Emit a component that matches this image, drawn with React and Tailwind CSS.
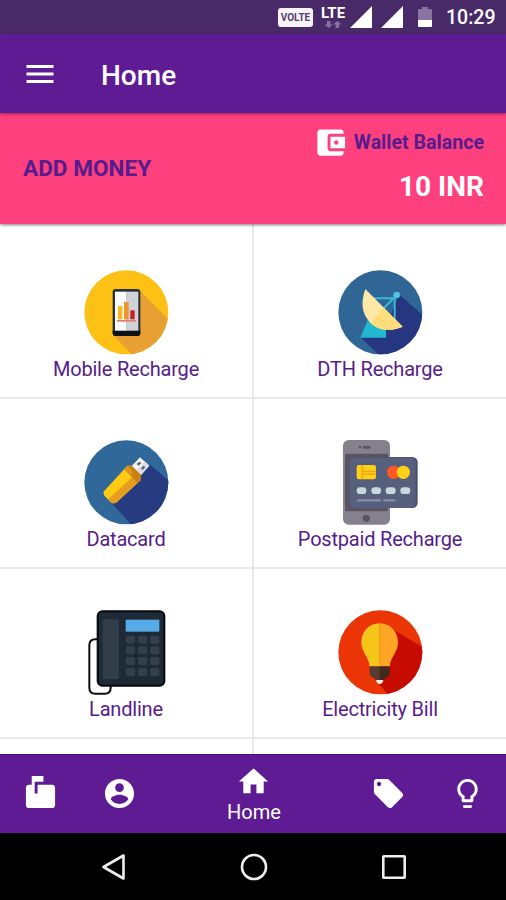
import React from "react";

function MaterialIcon({ d, className = "" }) {
  return (
    <svg viewBox="0 0 24 24" className={`block shrink-0 fill-current ${className}`}>
      <path d={d} />
    </svg>
  );
}

const icons = {
  menu: "M3 18h18v-2H3v2zm0-5h18v-2H3v2zm0-7v2h18V6H3z",
  wallet:
    "M21 18v1c0 1.1-.9 2-2 2H5c-1.11 0-2-.9-2-2V5c0-1.1.89-2 2-2h14c1.1 0 2 .9 2 2v1h-9c-1.11 0-2 .9-2 2v8c0 1.1.89 2 2 2h9zm-9-2h10V8H12v8zm4-2.5c-.83 0-1.5-.67-1.5-1.5s.67-1.5 1.5-1.5 1.5.67 1.5 1.5-.67 1.5-1.5 1.5z",
  mailbox:
    "M20 6H10v6H8V4h6V0H6v6H4c-1.1 0-2 .9-2 2v12c0 1.1.9 2 2 2h16c1.1 0 2-.9 2-2V8c0-1.1-.9-2-2-2z",
  account:
    "M12 2C6.48 2 2 6.48 2 12s4.48 10 10 10 10-4.48 10-10S17.52 2 12 2zm0 3c1.66 0 3 1.34 3 3s-1.34 3-3 3-3-1.34-3-3 1.34-3 3-3zm0 14.2c-2.5 0-4.71-1.28-6-3.22.03-1.99 4-3.08 6-3.08 1.99 0 5.97 1.09 6 3.08-1.29 1.94-3.5 3.22-6 3.22z",
  home: "M10 20v-6h4v6h5v-8h3L12 3 2 12h3v8z",
  tag: "M21.41 11.58l-9-9C12.05 2.22 11.55 2 11 2H4c-1.1 0-2 .9-2 2v7c0 .55.22 1.05.59 1.42l9 9c.36.36.86.58 1.41.58.55 0 1.05-.22 1.41-.59l7-7c.37-.36.59-.86.59-1.41 0-.55-.23-1.06-.59-1.42zM5.5 7C4.67 7 4 6.33 4 5.5S4.67 4 5.5 4 7 4.67 7 5.5 6.33 7 5.5 7z",
  bulb: "M9 21c0 .55.45 1 1 1h4c.55 0 1-.45 1-1v-1H9v1zm3-19C8.14 2 5 5.14 5 9c0 2.38 1.19 4.47 3 5.74V17c0 .55.45 1 1 1h6c.55 0 1-.45 1-1v-2.26c1.81-1.27 3-3.36 3-5.74 0-3.86-3.14-7-7-7zm2.85 11.1l-.85.6V16h-4v-2.3l-.85-.6C7.8 12.16 7 10.63 7 9c0-2.76 2.24-5 5-5s5 2.24 5 5c0 1.63-.8 3.16-2.15 4.1z",
};

function MobileArt() {
  return (
    <svg viewBox="102 30 252 252" className="block size-[84px] overflow-visible">
      <clipPath id="mobile-disc"><circle cx="229" cy="157" r="126" /></clipPath>
      <g clipPath="url(#mobile-disc)">
        <rect x="100" y="28" width="260" height="260" fill="#fdc015" />
        <path d="M270 92L366 188V300H262L190 226Z" fill="#e8a033" />
      </g>
      <rect x="188" y="87" width="83" height="141" rx="9" fill="#263238" />
      <path d="M188 212h83v7a9 9 0 0 1-9 9h-65a9 9 0 0 1-9-9z" fill="#0e1318" />
      <rect x="195" y="95" width="35" height="117" fill="#fafcfd" />
      <rect x="229" y="95" width="36" height="117" fill="#cfd3d9" />
      <rect x="204" y="138" width="13" height="40" fill="#fbb71a" />
      <rect x="222" y="126" width="14" height="52" fill="#f0932b" />
      <rect x="241" y="151" width="13" height="27" fill="#c62020" />
      <rect x="201" y="180" width="56" height="5" fill="#dd8070" />
    </svg>
  );
}

function DishArt() {
  return (
    <svg viewBox="114 30 252 252" className="block size-[84px] overflow-visible">
      <clipPath id="dish-disc"><circle cx="241" cy="157" r="126" /></clipPath>
      <g clipPath="url(#dish-disc)">
        <rect x="112" y="28" width="260" height="260" fill="#2f6696" />
        <path d="M297 103L375 172V300H252L182 232L258 200Z" fill="#263680" />
      </g>
      <path d="M205 176L181 233H258V200Z" fill="#22b8d0" />
      <path d="M218 115H287M284 112V190M289 106L243 153" fill="none" stroke="#37bad4" strokeWidth="6" />
      <circle cx="290" cy="105" r="10" fill="#4cc3e3" />
      <path d="M196 87L308 200C278 213 239 216 211 188C181 158 184 121 196 87Z" fill="#ffe8a6" />
      <path d="M251 143L308 200C278 213 239 216 211 188Z" fill="#ffdc7c" />
    </svg>
  );
}

function UsbArt() {
  return (
    <svg viewBox="102 30 252 252" className="block size-[84px] overflow-visible">
      <clipPath id="usb-disc"><circle cx="229" cy="157" r="126" /></clipPath>
      <g clipPath="url(#usb-disc)">
        <rect x="100" y="28" width="260" height="260" fill="#31689a" />
        <path d="M298 103L366 160V300H258L185 219Z" fill="#263b80" />
      </g>
      <path d="M270 82L298 107L273 135L245 108Z" fill="#f2f4f7" />
      <path d="M284 94L298 107L273 135L260 121Z" fill="#d9dee5" />
      <path d="M260 101L269 95L274 100L265 107ZM273 115L281 107L286 112L277 120Z" fill="#56616e" />
      <path d="M232 107H245L273 135V149L200 217Q193 222 184 218L165 199Q158 192 162 184Z" fill="#ffcb12" />
      <path d="M257 132L273 149L200 217Q193 222 184 218L174 208Z" fill="#e89c20" />
      <path d="M232 107H245L273 135V149L263 159L224 119Z" fill="#ca8015" />
      <path d="M232 107L249 127L243 138L224 119Z" fill="#df951b" />
    </svg>
  );
}

function CardArt() {
  return (
    <svg viewBox="144 30 252 252" className="block size-[84px] overflow-visible">
      <rect x="159" y="30" width="141" height="254" rx="17" fill="#84818c" />
      <path d="M165 71H294V236Q294 244 286 244H173Q165 244 165 236Z" fill="#5a5364" />
      <circle cx="210" cy="52" r="4" fill="#5a5364" />
      <rect x="219" y="48" width="22" height="8" rx="4" fill="#5a5364" />
      <circle cx="229" cy="265" r="11" fill="#5a5364" />
      <rect x="179" y="81" width="204" height="153" rx="16" fill="#4c5066" />
      <rect x="179" y="83" width="198" height="151" rx="15" fill="#56607c" />
      <rect x="200" y="105" width="58" height="43" rx="7" fill="#ffd018" />
      <path d="M217 105V148M217 124H258M217 132H258" stroke="#f5a21a" strokeWidth="4" fill="none" />
      <circle cx="311" cy="127" r="20" fill="#ff5726" />
      <circle cx="340" cy="127" r="20" fill="#ffd018" />
      <g fill="#cbd6dd">
        <rect x="200" y="172" width="29" height="20" rx="10" />
        <rect x="244" y="172" width="29" height="20" rx="10" />
        <rect x="287" y="172" width="30" height="20" rx="10" />
        <rect x="331" y="172" width="30" height="20" rx="10" />
      </g>
      <path d="M204 211H270M283 211H313" stroke="#8990a4" strokeWidth="7" strokeLinecap="round" />
    </svg>
  );
}

function LandlineArt() {
  return (
    <svg viewBox="102 30 252 252" className="block size-[84px] overflow-visible">
      <path d="M148 118H136Q118 118 118 136V263Q118 281 136 281H164Q182 281 182 263V234" fill="none" stroke="#0b0d11" strokeWidth="6" />
      <rect x="143" y="34" width="200" height="223" rx="14" fill="#1e2a35" stroke="#05080c" strokeWidth="6" />
      <rect x="158" y="58" width="49" height="179" rx="6" fill="#313e49" />
      <rect x="227" y="59" width="101" height="36" fill="#55abe8" />
      <g fill="#333f49">
        {[107, 139, 171, 204].map((y) =>
          [227, 264, 300].map((x) => <rect key={`${x}-${y}`} x={x} y={y} width="28" height="24" rx="7" />)
        )}
      </g>
    </svg>
  );
}

function BulbArt() {
  return (
    <svg viewBox="114 30 252 252" className="block size-[84px] overflow-visible">
      <clipPath id="bulb-disc"><circle cx="241" cy="157" r="126" /></clipPath>
      <g clipPath="url(#bulb-disc)">
        <rect x="112" y="28" width="260" height="260" fill="#ec3507" />
        <path d="M282 91L375 145V300H280L225 240Z" fill="#c60b00" />
      </g>
      <path d="M239 70C206 70 184 96 184 127C184 158 206 169 209 200H239Z" fill="#f6c51a" />
      <path d="M239 70C272 70 294 96 294 127C294 158 272 169 269 200H239Z" fill="#ffa526" />
      <path d="M209 199H239V240H228L209 225Z" fill="#553b30" />
      <path d="M239 199H269V225L250 240H239Z" fill="#40291f" />
      <path d="M228 240H250Q248 252 239 252Q230 252 228 240Z" fill="#f4e9e4" />
    </svg>
  );
}

const services = [
  { label: "Mobile Recharge", Art: MobileArt },
  { label: "DTH Recharge", Art: DishArt },
  { label: "Datacard", Art: UsbArt },
  { label: "Postpaid Recharge", Art: CardArt },
  { label: "Landline", Art: LandlineArt },
  { label: "Electricity Bill", Art: BulbArt },
];

function StatusBar() {
  return (
    <div className="flex h-[34px] shrink-0 items-center bg-[#472a67] pl-[278px] text-white">
      <div className="mt-px flex h-[19px] w-[35px] items-center justify-center rounded-[3px] bg-[#f7f3fa] text-[10px] leading-none font-bold text-[#54406c]">
        VOLTE
      </div>
      <div className="ml-[7px] flex w-[26px] flex-col items-center">
        <span className="text-[15px] leading-[14px] font-bold">LTE</span>
        <svg viewBox="0 0 20 8" className="mt-px block h-[7px] w-[18px] fill-[#8772a0]">
          <path d="M3 0h4v4h3L5 8 0 4h3zM13 8h4V4h3l-5-4-5 4h3z" />
        </svg>
      </div>
      <svg viewBox="0 0 22 22" className="ml-1 block size-[22px] fill-white"><path d="M22 0V22H0Z" /></svg>
      <svg viewBox="0 0 22 22" className="ml-[9px] block size-[22px] fill-white"><path d="M22 0V22H0Z" /></svg>
      <svg viewBox="0 0 14 20" className="ml-[15px] block h-5 w-3.5">
        <path d="M4 0h6v2h3a1 1 0 0 1 1 1v10H0V3a1 1 0 0 1 1-1h3z" fill="#8873a1" />
        <path d="M0 13h14v6a1 1 0 0 1-1 1H1a1 1 0 0 1-1-1z" fill="#fff" />
      </svg>
      <span className="mt-[2px] ml-[14px] text-[19.5px] leading-none font-medium">10:29</span>
    </div>
  );
}

export default function App() {
  return (
    <div className="flex h-[900px] w-[506px] flex-col overflow-hidden bg-white font-['Roboto','Noto_Sans',sans-serif]">
      <StatusBar />

      <header className="relative z-10 flex h-[79px] shrink-0 items-center bg-[#5e1b94] pl-[22px] text-white shadow-[0_1px_3px_rgba(0,0,0,0.45)]">
        <MaterialIcon d={icons.menu} className="size-9" />
        <h1 className="mt-[4px] ml-[43px] text-[28px] leading-none font-medium">Home</h1>
      </header>

      <section className="relative flex h-[111px] shrink-0 justify-between bg-[#ff407e] pr-[22px] pl-[23px] shadow-[0_1px_3px_rgba(0,0,0,0.5)]">
        <span className="flex items-center text-[22.6px] font-bold text-[#561c8c]">ADD MONEY</span>
        <div className="flex flex-col items-end pt-[12px]">
          <div className="flex items-center text-[#561c8c]">
            <MaterialIcon d={icons.wallet} className="size-[35px] text-white" />
            <span className="mt-px ml-[6px] text-[19.6px] leading-none font-bold">Wallet Balance</span>
          </div>
          <span className="mt-[13px] text-[28px] leading-none font-bold text-white">10 INR</span>
        </div>
      </section>

      <main className="grid h-[530px] shrink-0 grid-cols-[254px_252px] grid-rows-[175px_170px_170px_15px] overflow-hidden">
        {services.map(({ label, Art }, i) => (
          <div
            key={label}
            className={`flex flex-col items-center justify-end border-b-2 border-[#e9e9e9] pb-4 ${i % 2 === 0 ? "border-r-2" : ""}`}
          >
            <Art />
            <span className="mt-[3px] text-[20px] leading-6 tracking-[-0.2px] whitespace-nowrap text-[#561c8c]">{label}</span>
          </div>
        ))}
        <div className="border-r-2 border-[#e9e9e9]" />
        <div />
      </main>

      <nav className="grid h-[79px] shrink-0 grid-cols-[79px_79px_190px_79px_79px] items-center justify-items-center border-t border-[#45107c] bg-[#5e1b94] pb-px pl-px text-white">
        <MaterialIcon d={icons.mailbox} className="size-[35px]" />
        <MaterialIcon d={icons.account} className="size-[35px]" />
        <div className="flex flex-col items-center">
          <MaterialIcon d={icons.home} className="size-[35px]" />
          <span className="mt-px text-[20px] leading-6">Home</span>
        </div>
        <MaterialIcon d={icons.tag} className="size-[35px]" />
        <MaterialIcon d={icons.bulb} className="size-[35px]" />
      </nav>

      <footer className="flex h-[67px] shrink-0 items-center bg-black pl-[101px]">
        <svg viewBox="0 0 26 28" className="block h-7 w-[26px]">
          <path d="M22.5 2.5V25.5L2.5 14Z" fill="none" stroke="#eee" strokeWidth="2.6" strokeLinejoin="round" />
        </svg>
        <svg viewBox="0 0 28 28" className="ml-[113px] block size-7">
          <circle cx="14" cy="14" r="12" fill="none" stroke="#eee" strokeWidth="2.6" />
        </svg>
        <svg viewBox="0 0 26 26" className="ml-[113px] block size-[26px]">
          <rect x="2.3" y="2.3" width="21.4" height="21.4" rx="0.5" fill="none" stroke="#eee" strokeWidth="2.6" />
        </svg>
      </footer>
    </div>
  );
}
